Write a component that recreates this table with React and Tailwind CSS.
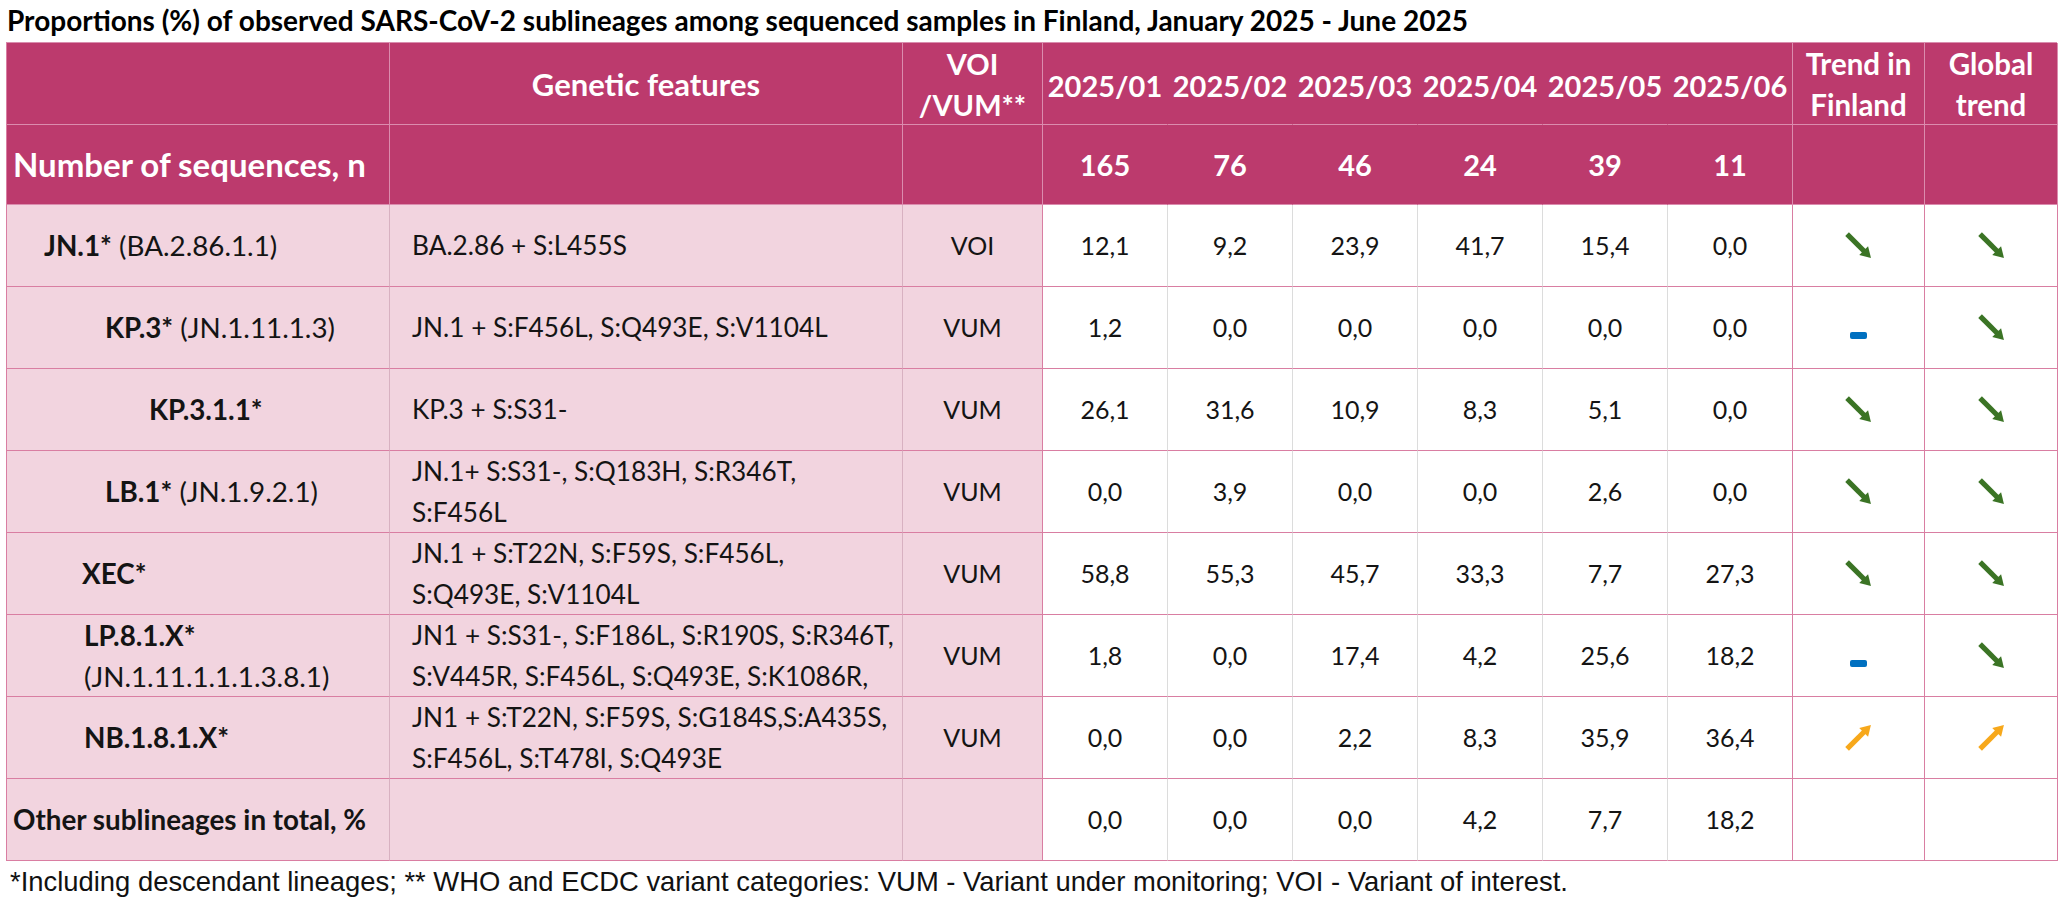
import React from "react";

const HEAD = "bg-[#BC3A6D] text-white font-bold";
const PINK = "bg-[#F2D4DF]";

function ArrowDown() {
  return (
    <svg width="27" height="27" viewBox="0 0 26 26">
      <line x1="2" y1="2" x2="19" y2="19" stroke="#3B7425" strokeWidth="5" />
      <polygon points="25,25 22.2,13.7 13.7,22.2" fill="#3B7425" />
    </svg>
  );
}

function ArrowUp() {
  return (
    <svg width="27" height="27" viewBox="0 0 26 26">
      <line x1="2" y1="24" x2="19" y2="7" stroke="#F7A81B" strokeWidth="5" />
      <polygon points="25,1 22.2,12.3 13.7,3.8" fill="#F7A81B" />
    </svg>
  );
}

function Dash() {
  return <div className="mt-[16px] h-[7px] w-[17px] rounded-[2px] bg-[#0070C0]" />;
}

function Trend({ t }) {
  if (t === "d") return <ArrowDown />;
  if (t === "u") return <ArrowUp />;
  if (t === "s") return <Dash />;
  return null;
}

const rows = [
  {
    name: <span><b>JN.1*</b> (BA.2.86.1.1)</span>,
    pl: "pl-[37px]",
    gen: ["BA.2.86 + S:L455S"],
    cat: "VOI",
    vals: ["12,1", "9,2", "23,9", "41,7", "15,4", "0,0"],
    tf: "d",
    tg: "d",
  },
  {
    name: <span><b>KP.3*</b> (JN.1.11.1.3)</span>,
    pl: "pl-[98px]",
    gen: ["JN.1 + S:F456L, S:Q493E, S:V1104L"],
    cat: "VUM",
    vals: ["1,2", "0,0", "0,0", "0,0", "0,0", "0,0"],
    tf: "s",
    tg: "d",
  },
  {
    name: <b>KP.3.1.1*</b>,
    pl: "pl-[142px]",
    gen: ["KP.3 + S:S31-"],
    cat: "VUM",
    vals: ["26,1", "31,6", "10,9", "8,3", "5,1", "0,0"],
    tf: "d",
    tg: "d",
  },
  {
    name: <span><b>LB.1*</b> (JN.1.9.2.1)</span>,
    pl: "pl-[98px]",
    gen: ["JN.1+ S:S31-, S:Q183H, S:R346T,", "S:F456L"],
    cat: "VUM",
    vals: ["0,0", "3,9", "0,0", "0,0", "2,6", "0,0"],
    tf: "d",
    tg: "d",
  },
  {
    name: <b>XEC*</b>,
    pl: "pl-[75px]",
    gen: ["JN.1 + S:T22N, S:F59S, S:F456L,", "S:Q493E, S:V1104L"],
    cat: "VUM",
    vals: ["58,8", "55,3", "45,7", "33,3", "7,7", "27,3"],
    tf: "d",
    tg: "d",
  },
  {
    name: (
      <div className="flex flex-col">
        <b>LP.8.1.X*</b>
        <span>(JN.1.11.1.1.1.3.8.1)</span>
      </div>
    ),
    pl: "pl-[77px]",
    gen: [
      "JN1 + S:S31-, S:F186L, S:R190S, S:R346T,",
      "S:V445R, S:F456L, S:Q493E, S:K1086R,",
    ],
    cat: "VUM",
    vals: ["1,8", "0,0", "17,4", "4,2", "25,6", "18,2"],
    tf: "s",
    tg: "d",
  },
  {
    name: <b>NB.1.8.1.X*</b>,
    pl: "pl-[77px]",
    gen: ["JN1 + S:T22N, S:F59S, S:G184S,S:A435S,", "S:F456L, S:T478I, S:Q493E"],
    cat: "VUM",
    vals: ["0,0", "0,0", "2,2", "8,3", "35,9", "36,4"],
    tf: "u",
    tg: "u",
  },
  {
    name: <b>Other sublineages in total, %</b>,
    pl: "pl-[6px]",
    gen: [],
    cat: "",
    vals: ["0,0", "0,0", "0,0", "4,2", "7,7", "18,2"],
    tf: "",
    tg: "",
  },
];

const months = ["2025/01", "2025/02", "2025/03", "2025/04", "2025/05", "2025/06"];
const counts = ["165", "76", "46", "24", "39", "11"];

export default function App() {
  return (
    <div className="w-[2067px] h-[905px] bg-white font-['Lato',sans-serif] text-[#141414]">
      <div className="h-[42px] pl-[7px] pt-[4px] text-[28px] leading-[32px] font-bold text-black whitespace-nowrap">
        Proportions (%) of observed SARS-CoV-2 sublineages among sequenced samples in Finland, January 2025 - June 2025
      </div>
      <div className="ml-[6px] grid w-[2051px] grid-cols-[383px_513px_140px_125px_125px_125px_125px_125px_125px_132px_133px] grid-rows-[82px_80px_repeat(8,82px)] border-t border-l border-t-[#D98DAE] border-l-[#D97EA2]">
        {/* header row 1 */}
        <div className={`${HEAD} border-r border-b border-[#DB8CAE]`} />
        <div className={`${HEAD} flex items-center justify-center border-r border-b border-[#DB8CAE] text-[31px] pt-[2px]`}>
          Genetic features
        </div>
        <div className={`${HEAD} flex flex-col items-center justify-center border-r border-b border-[#DB8CAE] text-[29px] leading-[41px]`}>
          <span>VOI</span>
          <span>/VUM**</span>
        </div>
        {months.map((m, i) => (
          <div
            key={m}
            className={`${HEAD} flex items-center justify-center border-b border-b-[#DB8CAE] border-r text-[29px] pt-[4px] whitespace-nowrap ${i === 5 ? "border-r-[#DB8CAE]" : "border-r-[#BC3A6D]"}`}
          >
            {m}
          </div>
        ))}
        <div className={`${HEAD} flex flex-col items-center justify-center border-r border-b border-[#DB8CAE] text-[29.5px] leading-[41px]`}>
          <span>Trend in</span>
          <span>Finland</span>
        </div>
        <div className={`${HEAD} flex flex-col items-center justify-center border-r border-b border-[#DB8CAE] text-[29.5px] leading-[41px]`}>
          <span>Global</span>
          <span>trend</span>
        </div>

        {/* header row 2 */}
        <div className={`${HEAD} flex items-center pl-[6px] border-r border-b border-[#DB8CAE] text-[33px] whitespace-nowrap`}>
          Number of sequences, n
        </div>
        <div className={`${HEAD} border-r border-b border-[#DB8CAE]`} />
        <div className={`${HEAD} border-r border-b border-[#DB8CAE]`} />
        {counts.map((c, i) => (
          <div
            key={i}
            className={`${HEAD} flex items-center justify-center border-b border-b-[#DB8CAE] border-r text-[29px] ${i === 5 ? "border-r-[#DB8CAE]" : "border-r-[#BC3A6D]"}`}
          >
            {c}
          </div>
        ))}
        <div className={`${HEAD} border-r border-b border-[#DB8CAE]`} />
        <div className={`${HEAD} border-r border-b border-[#DB8CAE]`} />

        {/* data rows */}
        {rows.map((r, ri) => (
          <React.Fragment key={ri}>
            <div className={`${PINK} ${r.pl} flex items-center border-r border-r-[#D8B1C1] border-b border-b-[#D97EA2] text-[27.8px] leading-[41px] whitespace-nowrap`}>
              {r.name}
            </div>
            <div className={`${PINK} pl-[22px] flex flex-col justify-center border-r border-r-[#D8B1C1] border-b border-b-[#D97EA2] text-[26.2px] leading-[41px] whitespace-nowrap`}>
              {r.gen.map((g, gi) => (
                <span key={gi}>{g}</span>
              ))}
            </div>
            <div className={`${PINK} flex items-center justify-center border-r border-r-[#D97EA2] border-b border-b-[#D97EA2] text-[25px]`}>
              {r.cat}
            </div>
            {r.vals.map((v, vi) => (
              <div
                key={vi}
                className={`flex items-center justify-center bg-white border-b border-b-[#D97EA2] border-r text-[25px] ${vi === 5 ? "border-r-[#D97EA2]" : "border-r-[#DCDCDC]"}`}
              >
                {v}
              </div>
            ))}
            <div className="flex items-center justify-center bg-white border-r border-r-[#D97EA2] border-b border-b-[#D97EA2]">
              <Trend t={r.tf} />
            </div>
            <div className="flex items-center justify-center bg-white border-r border-r-[#D97EA2] border-b border-b-[#D97EA2]">
              <Trend t={r.tg} />
            </div>
          </React.Fragment>
        ))}
      </div>
      <div className="mt-[6px] pl-[10px] font-['Liberation_Sans',sans-serif] text-[27.4px] leading-[30px] text-[#111] whitespace-nowrap">
        *Including descendant lineages; ** WHO and ECDC variant categories: VUM - Variant under monitoring; VOI - Variant of interest.
      </div>
    </div>
  );
}
